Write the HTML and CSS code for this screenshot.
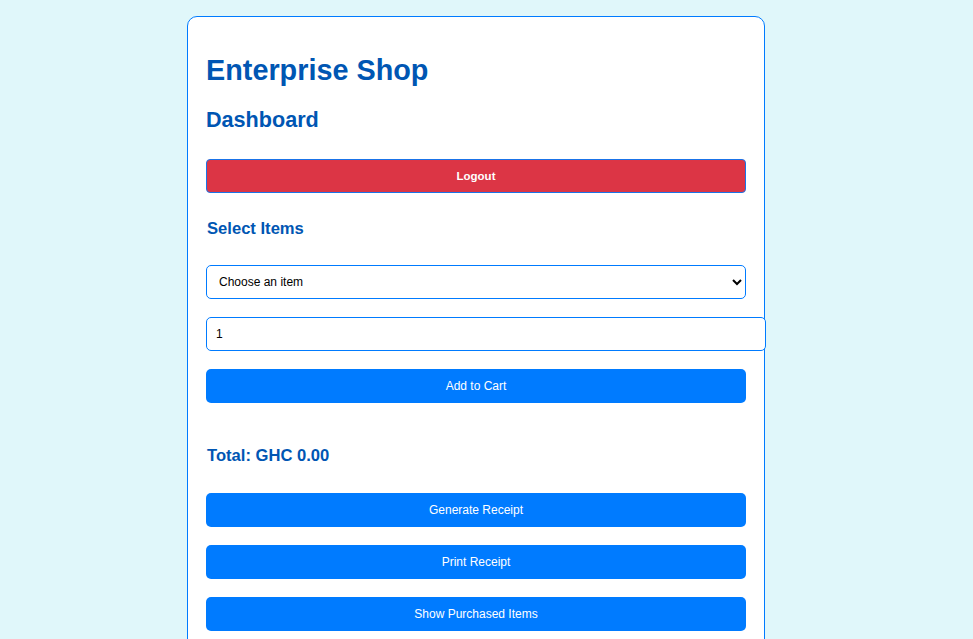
FILE: index.html
```html
<!DOCTYPE html>
<html lang="en">
<head>
<meta charset="utf-8">
<title>Enterprise Shop</title>
<link rel="stylesheet" href="styles.css">
</head>
<body>
  <div class="card">
    <h1 class="title">Enterprise Shop</h1>
    <h2 class="subtitle">Dashboard</h2>
    <button class="btn btn-danger logout">Logout</button>
    <h3 class="section">Select Items</h3>
    <select class="field select">
      <option>Choose an item</option>
    </select>
    <input class="field qty" type="number" value="1">
    <button class="btn add">Add to Cart</button>
    <h3 class="section total">Total: GHC 0.00</h3>
    <button class="btn action">Generate Receipt</button>
    <button class="btn action">Print Receipt</button>
    <button class="btn action">Show Purchased Items</button>
  </div>
</body>
</html>
```
FILE: styles.css
```css
html, body {
  margin: 0;
  padding: 0;
  background: #e0f7fa;
  font-family: "Liberation Sans", Arial, sans-serif;
}

.card {
  width: 540px;
  margin: 16px 0 0 187px;
  padding: 18px 18px 40px;
  background: #ffffff;
  border: 1px solid #007bff;
  border-radius: 10px;
}

.title {
  margin: 19px 0 20px;
  font-size: 28.8px;
  line-height: 33px;
  font-weight: bold;
  color: #0056b3;
}

.subtitle {
  margin: 0 0 27px;
  font-size: 21.6px;
  line-height: 25px;
  font-weight: bold;
  color: #0056b3;
}

.section {
  margin: 0 0 27px 1px;
  font-size: 16.6px;
  line-height: 19px;
  font-weight: bold;
  color: #0056b3;
}

.total {
  margin-bottom: 28px;
}

.btn {
  display: block;
  width: 540px;
  height: 34px;
  margin: 0 0 18px;
  padding: 0;
  border: none;
  border-radius: 5px;
  background: #007bff;
  color: #ffffff;
  font-family: "Liberation Sans", Arial, sans-serif;
  font-size: 12px;
}

.btn-danger {
  background: #dc3545;
  border: 1px solid #1a73e8;
  border-radius: 4px;
  font-size: 11.5px;
  font-weight: bold;
}

.logout {
  margin-bottom: 26px;
}

.add {
  margin-bottom: 43px;
}

.field {
  display: block;
  height: 34px;
  margin: 0 0 18px;
  border: 1px solid #007bff;
  border-radius: 5px;
  background: #ffffff;
  color: #000000;
  font-family: "Liberation Sans", Arial, sans-serif;
  font-size: 12px;
}

.select {
  width: 540px;
  padding: 0 8px;
}

.qty {
  box-sizing: content-box;
  width: 540px;
  height: 32px;
  padding: 0 9px;
}
```
